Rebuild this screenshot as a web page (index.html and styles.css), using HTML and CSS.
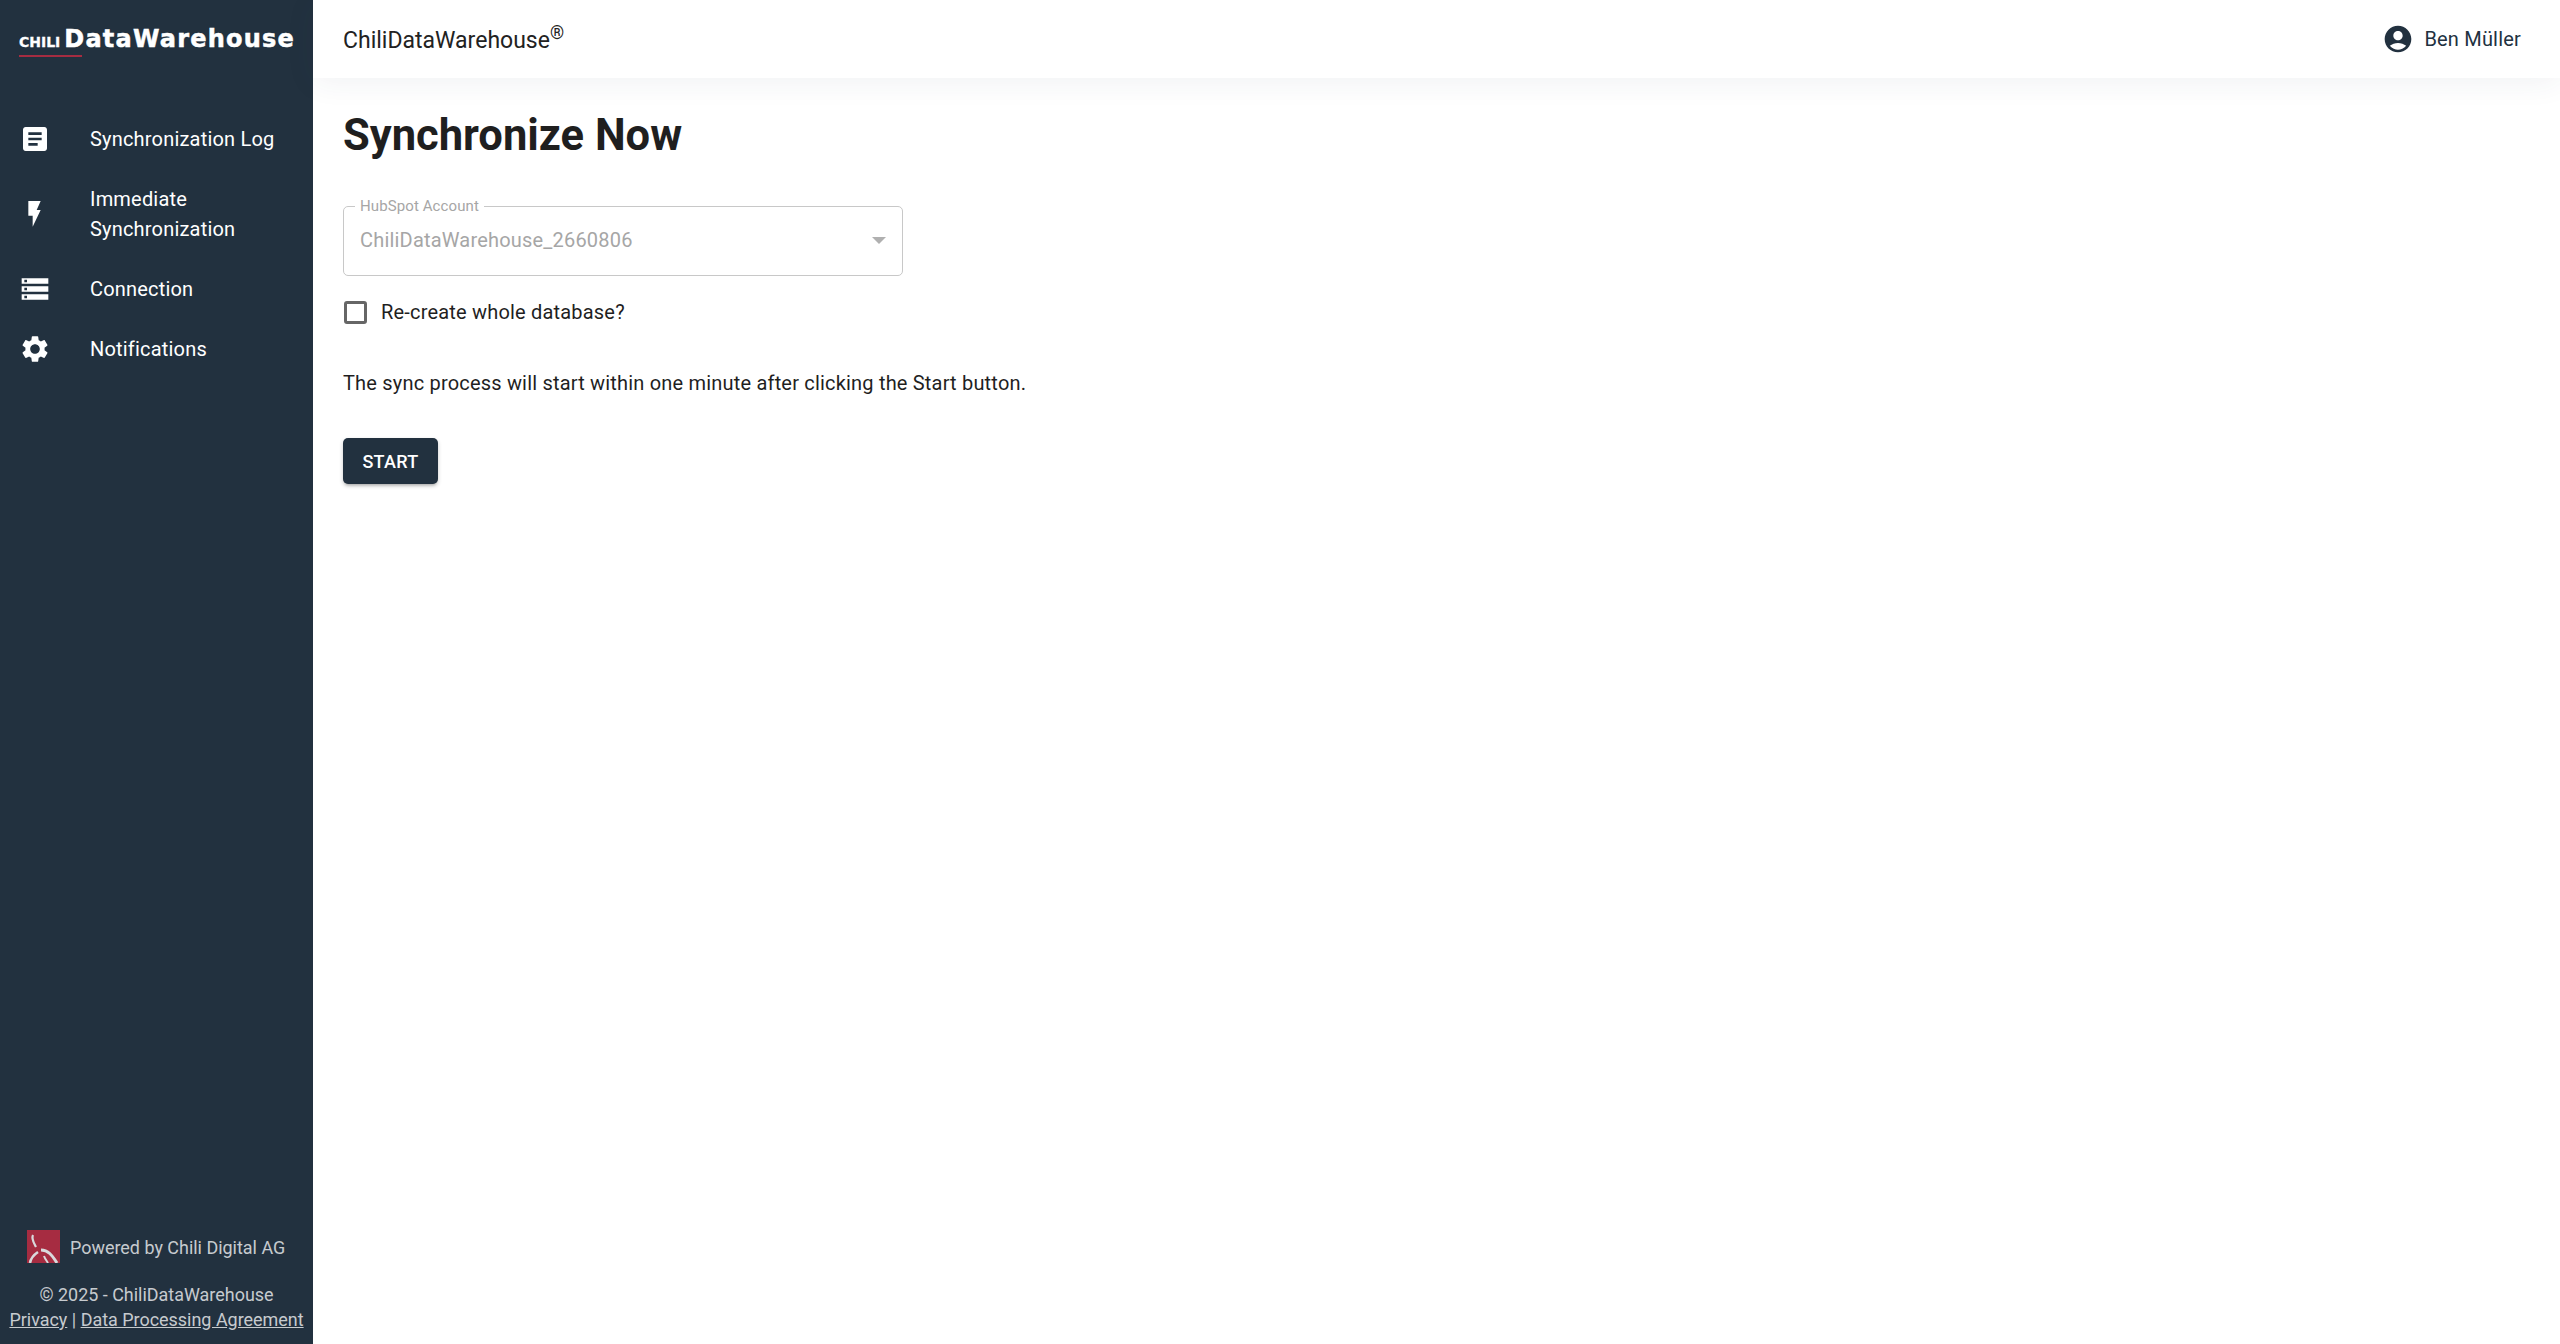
FILE: index.html
```html
<!DOCTYPE html>
<html lang="en">
<head>
<meta charset="utf-8">
<title>ChiliDataWarehouse</title>
<link rel="stylesheet" href="styles.css">
</head>
<body>
<div class="app">
  <aside class="sidebar">
    <div class="logo">
      <div class="logo-chili">CHILI</div>
      <div class="logo-main">DataWarehouse</div>
    </div>
    <nav class="nav">
      <a class="nav-item">
        <svg class="nav-icon" viewBox="0 0 24 24"><path d="M19 3H5c-1.1 0-2 .9-2 2v14c0 1.1.9 2 2 2h14c1.1 0 2-.9 2-2V5c0-1.1-.9-2-2-2zm-5 14H7v-2h7v2zm3-4H7v-2h10v2zm0-4H7V7h10v2z"/></svg>
        <span>Synchronization Log</span>
      </a>
      <a class="nav-item">
        <svg class="nav-icon" viewBox="0 0 24 24"><path d="M7 2.25h9.25L13.25 9h3l-6 12.5v-8.25H7z"/></svg>
        <span>Immediate Synchronization</span>
      </a>
      <a class="nav-item">
        <svg class="nav-icon" viewBox="0 0 24 24"><path d="M2 20h20v-4H2v4zm2-3h2v2H4v-2zM2 4v4h20V4H2zm4 3H4V5h2v2zm-4 7h20v-4H2v4zm2-3h2v2H4v-2z"/></svg>
        <span>Connection</span>
      </a>
      <a class="nav-item">
        <svg class="nav-icon" viewBox="0 0 24 24"><path d="M19.14 12.94c.04-.3.06-.61.06-.94 0-.32-.02-.64-.07-.94l2.03-1.58c.18-.14.23-.41.12-.61l-1.92-3.32c-.12-.22-.37-.29-.59-.22l-2.39.96c-.5-.38-1.03-.7-1.62-.94l-.36-2.54c-.04-.24-.24-.41-.48-.41h-3.84c-.24 0-.43.17-.47.41l-.36 2.54c-.59.24-1.13.57-1.62.94l-2.39-.96c-.22-.08-.47 0-.59.22L2.74 8.87c-.12.21-.08.47.12.61l2.03 1.58c-.05.3-.09.63-.09.94s.02.64.07.94l-2.03 1.58c-.18.14-.23.41-.12.61l1.92 3.32c.12.22.37.29.59.22l2.39-.96c.5.38 1.03.7 1.62.94l.36 2.54c.05.24.24.41.48.41h3.84c.24 0 .44-.17.47-.41l.36-2.54c.59-.24 1.13-.56 1.62-.94l2.39.96c.22.08.47 0 .59-.22l1.92-3.32c.12-.22.07-.47-.12-.61l-2.01-1.58zM12 15.6c-1.98 0-3.6-1.62-3.6-3.6s1.62-3.6 3.6-3.6 3.6 1.62 3.6 3.6-1.62 3.6-3.6 3.6z"/></svg>
        <span>Notifications</span>
      </a>
    </nav>
    <footer class="side-footer">
      <div class="powered">
        <svg class="powered-logo" viewBox="0 0 33 33">
          <rect width="33" height="33" fill="#a62c41"/>
          <path d="M6 5C4 9 7 13 9 17" fill="none" stroke="#d9d9dc" stroke-width="2.2"/>
          <path d="M14 20C21 20 25 25 30 33" fill="none" stroke="#d9d9dc" stroke-width="3"/>
          <path d="M3 33C4 27 8 24 11 22" fill="none" stroke="#d9d9dc" stroke-width="2.6"/>
          <path d="M17 26C18 29 20 31 21 33" fill="none" stroke="#d9d9dc" stroke-width="2"/>
        </svg>
        <span>Powered by Chili Digital AG</span>
      </div>
      <div class="copyright">© 2025 - ChiliDataWarehouse</div>
      <div class="legal"><a>Privacy</a> | <a>Data Processing Agreement</a></div>
    </footer>
  </aside>
  <div class="content">
    <header class="topbar">
      <div class="brand">ChiliDataWarehouse<sup>®</sup></div>
      <div class="user">
        <svg class="user-icon" viewBox="0 0 24 24"><path d="M12 2C6.48 2 2 6.48 2 12s4.48 10 10 10 10-4.48 10-10S17.52 2 12 2zm0 4c1.93 0 3.5 1.57 3.5 3.5S13.93 13 12 13s-3.5-1.57-3.5-3.5S10.07 6 12 6zm0 14c-2.03 0-4.43-.82-6.14-2.88C7.55 15.8 9.68 15 12 15s4.45.8 6.14 2.12C16.43 19.18 14.03 20 12 20z"/></svg>
        <span>Ben Müller</span>
      </div>
    </header>
    <main class="page">
      <h1 class="title">Synchronize Now</h1>
      <fieldset class="select">
        <legend class="select-label">HubSpot Account</legend>
        <span class="select-value">ChiliDataWarehouse_2660806</span>
        <span class="caret"></span>
      </fieldset>
      <label class="check">
        <span class="check-box"></span>
        <span>Re-create whole database?</span>
      </label>
      <p class="note">The sync process will start within one minute after clicking the Start button.</p>
      <button class="start" type="button">START</button>
    </main>
  </div>
</div>
</body>
</html>
```
FILE: styles.css
```css
* { box-sizing: border-box; }
html, body { margin: 0; height: 100%; }
body { font-family: Roboto, "Liberation Sans", sans-serif; color: #1f1f1f; background: #fff; }
.app { display: flex; height: 1344px; }

.sidebar { width: 313px; flex: none; background: #22313f; color: #fff; display: flex; flex-direction: column; }
.logo { height: 78px; padding: 26px 0 0 19px; display: flex; align-items: baseline; gap: 4px; font-family: "DejaVu Sans", sans-serif; font-weight: 700; white-space: nowrap; }
.logo-chili { position: relative; font-size: 14px; line-height: 14px; -webkit-text-stroke: 0.3px #fff; }
.logo-chili::after { content: ""; position: absolute; left: 0; top: 20px; width: 63px; height: 2px; background: #a62c41; }
.logo-main { font-size: 24px; line-height: 26px; letter-spacing: 1.2px; -webkit-text-stroke: 0.5px #fff; }

.nav { padding-top: 31px; display: flex; flex-direction: column; }
.nav-item { display: flex; align-items: center; padding: 15px 20px 15px 19px; font-size: 20px; line-height: 30px; letter-spacing: 0.19px; color: #fff; }
.nav-icon { width: 32px; height: 32px; flex: none; margin: -1px 39px -1px 0; fill: #fff; }

.side-footer { margin-top: auto; padding-bottom: 12px; text-align: center; font-size: 17.95px; color: rgba(255,255,255,.75); }
.powered { display: flex; align-items: center; padding-left: 27px; gap: 10px; margin-bottom: 17px; }
.powered-logo { width: 33px; height: 33px; flex: none; margin-bottom: 2px; }
.copyright { line-height: 25px; }
.legal { line-height: 25px; white-space: nowrap; }
.legal a { text-decoration: underline; }

.content { flex: 1; display: flex; flex-direction: column; min-width: 0; }
.topbar { height: 78px; flex: none; display: flex; align-items: center; justify-content: space-between; padding: 0 39px 0 30px; background: #fff; box-shadow: 0 4px 30px rgba(40,50,90,.07); position: relative; }
.brand { margin-top: 2px; font-size: 23px; color: #222; }
.brand sup { font-size: 18px; line-height: 0; }
.user { display: flex; align-items: center; gap: 10px; padding-bottom: 1px; font-size: 20px; letter-spacing: 0.19px; color: #22313f; }
.user-icon { width: 32px; height: 32px; fill: #22313f; }

.page { padding: 31px 30px; }
.title { margin: 0 0 36px; font-size: 43.5px; line-height: 54px; font-weight: 700; color: #1f1f1f; }
.select { width: 560px; height: 77px; margin: 0; padding: 0 16px 9px 16px; border: 1px solid #c8c8c8; border-radius: 5px; display: flex; align-items: center; justify-content: space-between; }
.select-label { padding: 0 5px; margin-left: -5px; font-size: 15px; line-height: 15px; letter-spacing: 0.1px; color: #a6a6a6; }
.select-value { font-size: 20px; letter-spacing: 0.19px; color: #a6a6a6; }
.caret { border: 7px solid transparent; border-top-color: #b0b0b0; border-bottom-width: 0; }
.check { display: flex; align-items: center; gap: 14px; margin-top: 24px; padding-left: 1px; font-size: 20px; letter-spacing: 0.19px; }
.check-box { width: 23px; height: 23px; border: 3px solid #666; border-radius: 3px; }
.note { margin: 44px 0 0; font-size: 20px; line-height: 30px; letter-spacing: 0.19px; }
.start { display: block; margin-top: 40px; width: 95px; height: 46px; padding: 0; border: 0; border-radius: 5px; background: #22313f; color: #fff; font: 500 18px Roboto, sans-serif; letter-spacing: 0.3px; box-shadow: 0 3px 3px -2px rgba(0,0,0,.2), 0 2px 4px rgba(0,0,0,.2); }
```
